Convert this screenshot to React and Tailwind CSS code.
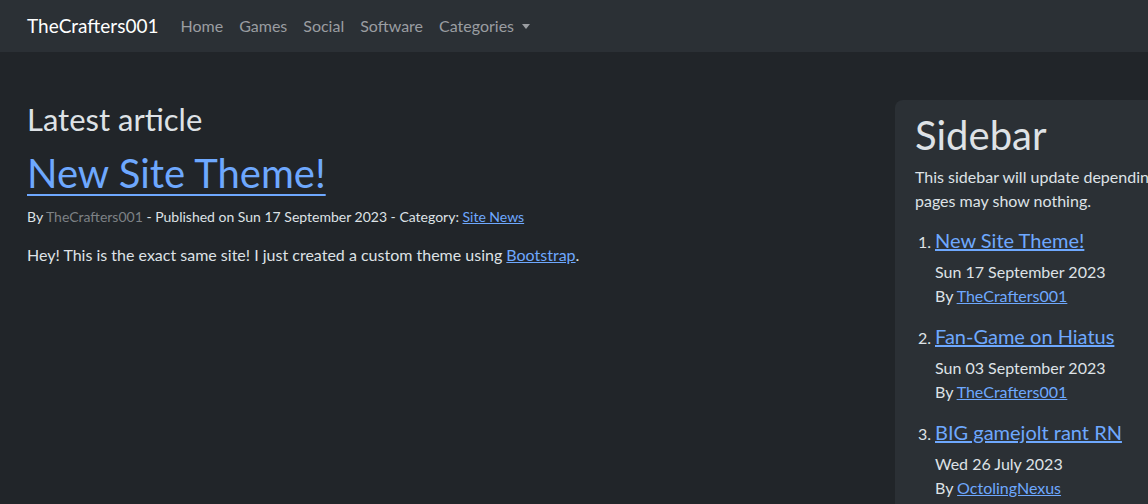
const font = { fontFamily: '"Lato", "Liberation Sans", sans-serif' };

const posts = [
  { title: "New Site Theme!", date: "Sun 17 September 2023", author: "TheCrafters001" },
  { title: "Fan-Game on Hiatus", date: "Sun 03 September 2023", author: "TheCrafters001" },
  { title: "BIG gamejolt rant RN", date: "Wed 26 July 2023", author: "OctolingNexus" },
];

function Navbar() {
  const links = ["Home", "Games", "Social", "Software"];
  return (
    <nav className="h-[52px] bg-[#2b3035] flex items-center px-[27px]">
      <a className="text-[19px] text-white mr-[14px]">TheCrafters001</a>
      <ul className="flex items-center text-[16px] text-[#9a9da1]">
        {links.map(l => (
          <li key={l} className="px-[8px]">{l}</li>
        ))}
        <li className="px-[8px] flex items-center">
          Categories
          <span className="ml-[8px] w-0 h-0 border-l-[4px] border-r-[4px] border-t-[5px] border-l-transparent border-r-transparent border-t-[#9a9da1]" />
        </li>
      </ul>
    </nav>
  );
}

function Article() {
  return (
    <main className="w-[895px] shrink-0 pl-[27px]">
      <h2 className="text-[31px] leading-[38px] text-[#dee2e6]">Latest article</h2>
      <h1 className="mt-[10px] text-[40px] leading-[50px]">
        <a className="text-[#6ea8fe] underline underline-offset-[6px] decoration-[2px]">New Site Theme!</a>
      </h1>
      <p className="mt-[8px] text-[14px] leading-[21px] text-[#dee2e6]">
        By <span className="text-[#7d8185]">TheCrafters001</span> - Published on Sun 17 September 2023 - Category:{" "}
        <a className="text-[#6ea8fe] underline">Site News</a>
      </p>
      <p className="mt-[16px] text-[16px] leading-[24px] text-[#dee2e6]">
        Hey! This is the exact same site! I just created a custom theme using{" "}
        <a className="text-[#6ea8fe] underline">Bootstrap</a>.
      </p>
    </main>
  );
}

function Sidebar() {
  return (
    <aside className="w-[500px] shrink-0 bg-[#2b3035] rounded-[8px] px-[20px] pt-[10px] pb-[20px]">
      <h3 className="text-[40px] leading-[50px] text-[#dee2e6]">Sidebar</h3>
      <p className="mt-[5px] text-[16px] leading-[24px] text-[#dee2e6] whitespace-nowrap">
        This sidebar will update depending on the page you are on. Some
        <br />
        pages may show nothing.
      </p>
      <ol className="mt-[12px]">
        {posts.map((p, i) => (
          <li key={p.title} className="mb-[13px]">
            <div className="flex items-baseline">
              <span className="w-[20px] pr-[4px] text-right text-[16px] text-[#dee2e6]">{i + 1}.</span>
              <a className="text-[20px] leading-[30px] text-[#6ea8fe] underline">{p.title}</a>
            </div>
            <div className="pl-[20px] mt-[5px] text-[16px] leading-[24px] text-[#dee2e6]">
              <div>{p.date}</div>
              <div>
                By <a className="text-[#6ea8fe] underline">{p.author}</a>
              </div>
            </div>
          </li>
        ))}
      </ol>
    </aside>
  );
}

export default function App() {
  return (
    <div className="w-[1148px] h-[504px] overflow-hidden bg-[#212529]" style={font}>
      <Navbar />
      <div className="flex mt-[48px]">
        <Article />
        <Sidebar />
      </div>
    </div>
  );
}
